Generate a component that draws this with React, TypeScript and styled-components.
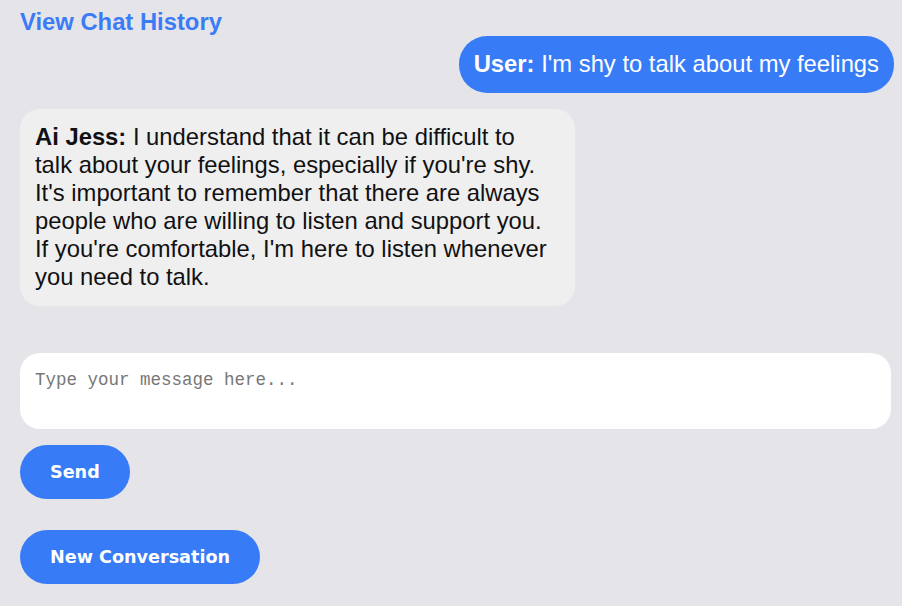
import styled, { createGlobalStyle } from "styled-components";

const GlobalStyle = createGlobalStyle`
  html, body {
    margin: 0;
    padding: 0;
    background-color: #e5e4e9;
    font-family: "Liberation Sans", Arial, sans-serif;
  }
`;

const Wrapper = styled.div`
  display: flex;
  flex-direction: column;
  padding: 8px 8px 20px 20px;
`;

const HistoryLink = styled.a`
  align-self: flex-start;
  font-size: 23.8px;
  line-height: 28px;
  font-weight: bold;
  color: #3b7cf6;
  text-decoration: none;
  cursor: pointer;
`;

const MessageList = styled.div`
  display: flex;
  flex-direction: column;
  gap: 16px;
`;

const Bubble = styled.div<{ $mine?: boolean }>`
  align-self: ${(p) => (p.$mine ? "flex-end" : "flex-start")};
  max-width: 518px;
  padding: ${(p) => (p.$mine ? "14px 15px 15px" : "14px 22px 15px 15px")};
  font-size: 23.8px;
  line-height: 28px;
  border-radius: ${(p) => (p.$mine ? "28px" : "20px")};
  background-color: ${(p) => (p.$mine ? "#377bf6" : "#efeff0")};
  color: ${(p) => (p.$mine ? "#ffffff" : "#111111")};
`;

const Sender = styled.strong`
  font-weight: bold;
`;

const MessageInput = styled.textarea`
  box-sizing: border-box;
  width: calc(100% - 3px);
  height: 76px;
  margin-top: 47px;
  padding: 17px 15px;
  border: none;
  border-radius: 20px;
  background-color: #ffffff;
  font-family: "Liberation Mono", monospace;
  font-size: 17.5px;
  resize: none;
  outline: none;

  &::placeholder {
    color: #777777;
  }
`;

const Actions = styled.div`
  display: flex;
  flex-direction: column;
  align-items: flex-start;
  gap: 31px;
  margin-top: 16px;
`;

const PillButton = styled.button`
  display: flex;
  align-items: center;
  height: 54px;
  padding: 0 30px;
  border: none;
  border-radius: 27px;
  background-color: #377bf6;
  color: #ffffff;
  font-family: "DejaVu Sans", Verdana, sans-serif;
  font-size: 17.6px;
  font-weight: bold;
  cursor: pointer;
`;

function App() {
  return (
    <Wrapper>
      <GlobalStyle />
      <HistoryLink>View Chat History</HistoryLink>
      <MessageList>
        <Bubble $mine>
          <Sender>User:</Sender> I'm shy to talk about my feelings
        </Bubble>
        <Bubble>
          <Sender>Ai Jess:</Sender> I understand that it can be difficult to
          talk about your feelings, especially if you're shy. It's important to
          remember that there are always people who are willing to listen and
          support you. If you're comfortable, I'm here to listen whenever you
          need to talk.
        </Bubble>
      </MessageList>
      <MessageInput placeholder="Type your message here..." />
      <Actions>
        <PillButton>Send</PillButton>
        <PillButton>New Conversation</PillButton>
      </Actions>
    </Wrapper>
  );
}

export default App;
